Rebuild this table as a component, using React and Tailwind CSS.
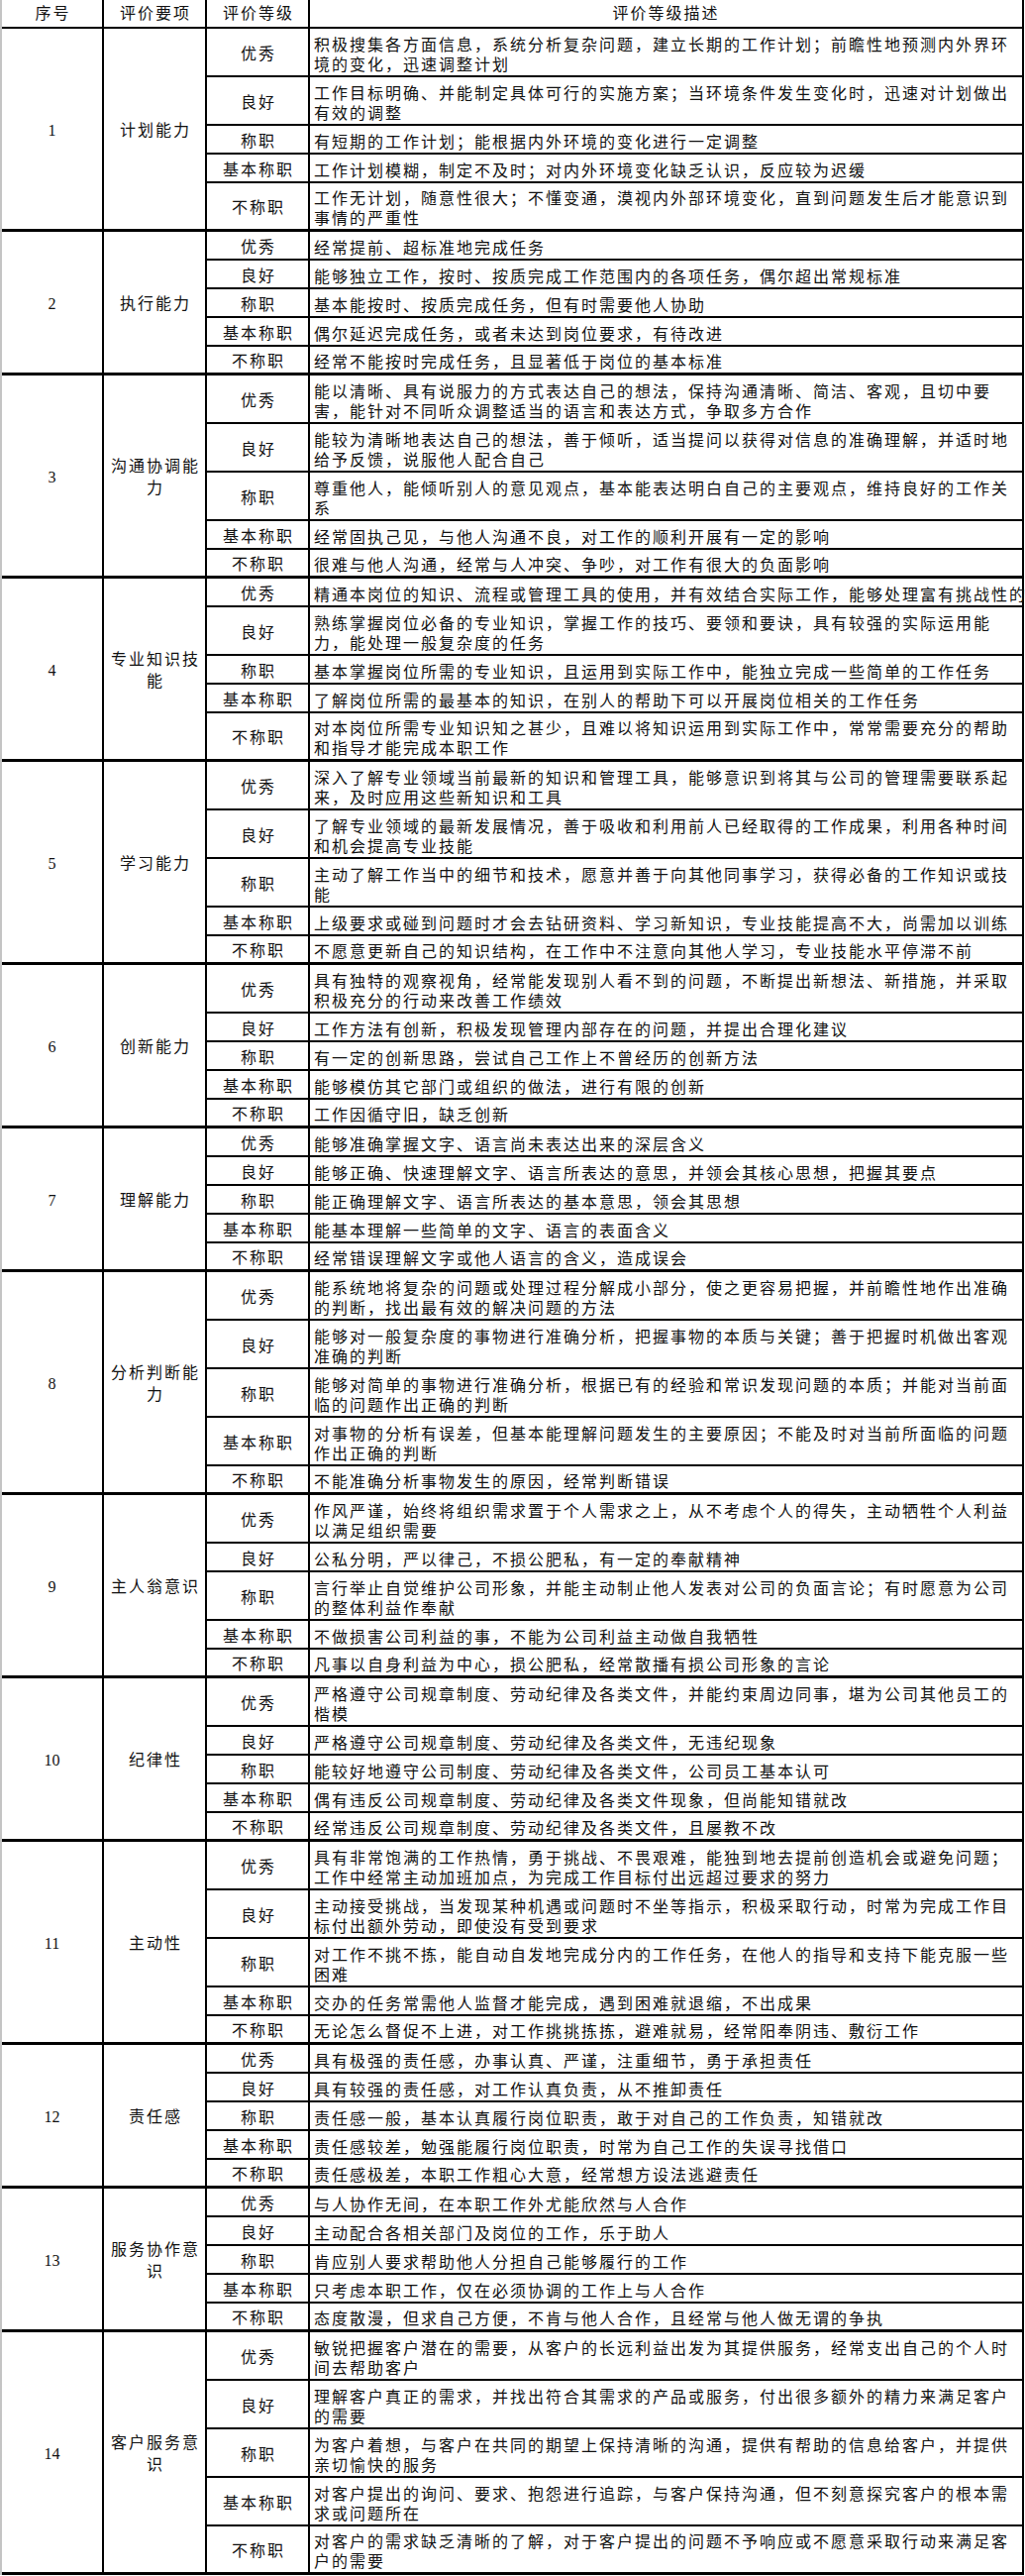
import React from 'react';

const LV = ['优秀', '良好', '称职', '基本称职', '不称职'];

// each group: number, label lines, and the description lines for the five levels
const groups = [
  {
    no: 1,
    item: ['计划能力'],
    rows: [
      ['积极搜集各方面信息，系统分析复杂问题，建立长期的工作计划；前瞻性地预测内外界环', '境的变化，迅速调整计划'],
      ['工作目标明确、并能制定具体可行的实施方案；当环境条件发生变化时，迅速对计划做出', '有效的调整'],
      ['有短期的工作计划；能根据内外环境的变化进行一定调整'],
      ['工作计划模糊，制定不及时；对内外环境变化缺乏认识，反应较为迟缓'],
      ['工作无计划，随意性很大；不懂变通，漠视内外部环境变化，直到问题发生后才能意识到', '事情的严重性'],
    ],
  },
  {
    no: 2,
    item: ['执行能力'],
    rows: [
      ['经常提前、超标准地完成任务'],
      ['能够独立工作，按时、按质完成工作范围内的各项任务，偶尔超出常规标准'],
      ['基本能按时、按质完成任务，但有时需要他人协助'],
      ['偶尔延迟完成任务，或者未达到岗位要求，有待改进'],
      ['经常不能按时完成任务，且显著低于岗位的基本标准'],
    ],
  },
  {
    no: 3,
    item: ['沟通协调能', '力'],
    rows: [
      ['能以清晰、具有说服力的方式表达自己的想法，保持沟通清晰、简洁、客观，且切中要', '害，能针对不同听众调整适当的语言和表达方式，争取多方合作'],
      ['能较为清晰地表达自己的想法，善于倾听，适当提问以获得对信息的准确理解，并适时地', '给予反馈，说服他人配合自己'],
      ['尊重他人，能倾听别人的意见观点，基本能表达明白自己的主要观点，维持良好的工作关', '系'],
      ['经常固执己见，与他人沟通不良，对工作的顺利开展有一定的影响'],
      ['很难与他人沟通，经常与人冲突、争吵，对工作有很大的负面影响'],
    ],
  },
  {
    no: 4,
    item: ['专业知识技', '能'],
    rows: [
      ['精通本岗位的知识、流程或管理工具的使用，并有效结合实际工作，能够处理富有挑战性的工作'],
      ['熟练掌握岗位必备的专业知识，掌握工作的技巧、要领和要诀，具有较强的实际运用能', '力，能处理一般复杂度的任务'],
      ['基本掌握岗位所需的专业知识，且运用到实际工作中，能独立完成一些简单的工作任务'],
      ['了解岗位所需的最基本的知识，在别人的帮助下可以开展岗位相关的工作任务'],
      ['对本岗位所需专业知识知之甚少，且难以将知识运用到实际工作中，常常需要充分的帮助', '和指导才能完成本职工作'],
    ],
  },
  {
    no: 5,
    item: ['学习能力'],
    rows: [
      ['深入了解专业领域当前最新的知识和管理工具，能够意识到将其与公司的管理需要联系起', '来，及时应用这些新知识和工具'],
      ['了解专业领域的最新发展情况，善于吸收和利用前人已经取得的工作成果，利用各种时间', '和机会提高专业技能'],
      ['主动了解工作当中的细节和技术，愿意并善于向其他同事学习，获得必备的工作知识或技', '能'],
      ['上级要求或碰到问题时才会去钻研资料、学习新知识，专业技能提高不大，尚需加以训练'],
      ['不愿意更新自己的知识结构，在工作中不注意向其他人学习，专业技能水平停滞不前'],
    ],
  },
  {
    no: 6,
    item: ['创新能力'],
    rows: [
      ['具有独特的观察视角，经常能发现别人看不到的问题，不断提出新想法、新措施，并采取', '积极充分的行动来改善工作绩效'],
      ['工作方法有创新，积极发现管理内部存在的问题，并提出合理化建议'],
      ['有一定的创新思路，尝试自己工作上不曾经历的创新方法'],
      ['能够模仿其它部门或组织的做法，进行有限的创新'],
      ['工作因循守旧，缺乏创新'],
    ],
  },
  {
    no: 7,
    item: ['理解能力'],
    rows: [
      ['能够准确掌握文字、语言尚未表达出来的深层含义'],
      ['能够正确、快速理解文字、语言所表达的意思，并领会其核心思想，把握其要点'],
      ['能正确理解文字、语言所表达的基本意思，领会其思想'],
      ['能基本理解一些简单的文字、语言的表面含义'],
      ['经常错误理解文字或他人语言的含义，造成误会'],
    ],
  },
  {
    no: 8,
    item: ['分析判断能', '力'],
    rows: [
      ['能系统地将复杂的问题或处理过程分解成小部分，使之更容易把握，并前瞻性地作出准确', '的判断，找出最有效的解决问题的方法'],
      ['能够对一般复杂度的事物进行准确分析，把握事物的本质与关键；善于把握时机做出客观', '准确的判断'],
      ['能够对简单的事物进行准确分析，根据已有的经验和常识发现问题的本质；并能对当前面', '临的问题作出正确的判断'],
      ['对事物的分析有误差，但基本能理解问题发生的主要原因；不能及时对当前所面临的问题', '作出正确的判断'],
      ['不能准确分析事物发生的原因，经常判断错误'],
    ],
  },
  {
    no: 9,
    item: ['主人翁意识'],
    rows: [
      ['作风严谨，始终将组织需求置于个人需求之上，从不考虑个人的得失，主动牺牲个人利益', '以满足组织需要'],
      ['公私分明，严以律己，不损公肥私，有一定的奉献精神'],
      ['言行举止自觉维护公司形象，并能主动制止他人发表对公司的负面言论；有时愿意为公司', '的整体利益作奉献'],
      ['不做损害公司利益的事，不能为公司利益主动做自我牺牲'],
      ['凡事以自身利益为中心，损公肥私，经常散播有损公司形象的言论'],
    ],
  },
  {
    no: 10,
    item: ['纪律性'],
    rows: [
      ['严格遵守公司规章制度、劳动纪律及各类文件，并能约束周边同事，堪为公司其他员工的', '楷模'],
      ['严格遵守公司规章制度、劳动纪律及各类文件，无违纪现象'],
      ['能较好地遵守公司制度、劳动纪律及各类文件，公司员工基本认可'],
      ['偶有违反公司规章制度、劳动纪律及各类文件现象，但尚能知错就改'],
      ['经常违反公司规章制度、劳动纪律及各类文件，且屡教不改'],
    ],
  },
  {
    no: 11,
    item: ['主动性'],
    rows: [
      ['具有非常饱满的工作热情，勇于挑战、不畏艰难，能独到地去提前创造机会或避免问题；', '工作中经常主动加班加点，为完成工作目标付出远超过要求的努力'],
      ['主动接受挑战，当发现某种机遇或问题时不坐等指示，积极采取行动，时常为完成工作目', '标付出额外劳动，即使没有受到要求'],
      ['对工作不挑不拣，能自动自发地完成分内的工作任务，在他人的指导和支持下能克服一些', '困难'],
      ['交办的任务常需他人监督才能完成，遇到困难就退缩，不出成果'],
      ['无论怎么督促不上进，对工作挑挑拣拣，避难就易，经常阳奉阴违、敷衍工作'],
    ],
  },
  {
    no: 12,
    item: ['责任感'],
    rows: [
      ['具有极强的责任感，办事认真、严谨，注重细节，勇于承担责任'],
      ['具有较强的责任感，对工作认真负责，从不推卸责任'],
      ['责任感一般，基本认真履行岗位职责，敢于对自己的工作负责，知错就改'],
      ['责任感较差，勉强能履行岗位职责，时常为自己工作的失误寻找借口'],
      ['责任感极差，本职工作粗心大意，经常想方设法逃避责任'],
    ],
  },
  {
    no: 13,
    item: ['服务协作意', '识'],
    rows: [
      ['与人协作无间，在本职工作外尤能欣然与人合作'],
      ['主动配合各相关部门及岗位的工作，乐于助人'],
      ['肯应别人要求帮助他人分担自己能够履行的工作'],
      ['只考虑本职工作，仅在必须协调的工作上与人合作'],
      ['态度散漫，但求自己方便，不肯与他人合作，且经常与他人做无谓的争执'],
    ],
  },
  {
    no: 14,
    item: ['客户服务意', '识'],
    rows: [
      ['敏锐把握客户潜在的需要，从客户的长远利益出发为其提供服务，经常支出自己的个人时', '间去帮助客户'],
      ['理解客户真正的需求，并找出符合其需求的产品或服务，付出很多额外的精力来满足客户', '的需要'],
      ['为客户着想，与客户在共同的期望上保持清晰的沟通，提供有帮助的信息给客户，并提供', '亲切愉快的服务'],
      ['对客户提出的询问、要求、抱怨进行追踪，与客户保持沟通，但不刻意探究客户的根本需', '求或问题所在'],
      ['对客户的需求缺乏清晰的了解，对于客户提出的问题不予响应或不愿意采取行动来满足客', '户的需要'],
    ],
  },
];

const font = "font-['Liberation_Serif','Noto_Sans_CJK_SC',serif]";

function Group({ g }) {
  return (
    <div className="flex">
      <div className="w-[103px] shrink-0 border-r-2 border-b-[3px] border-black flex items-center justify-center text-[16px] font-['Liberation_Serif',serif] pt-1">
        {g.no}
      </div>
      <div className="w-[104px] shrink-0 border-r-2 border-b-[3px] border-black flex flex-col items-center justify-center leading-[22px] tracking-[2px] pl-[2px] pt-1">
        {g.item.map((t) => (
          <div key={t}>{t}</div>
        ))}
      </div>
      <div className="flex-1 flex flex-col min-w-0">
        {g.rows.map((lines, i) => {
          const last = i === g.rows.length - 1;
          const tall = lines.length > 1;
          return (
            <div
              key={i}
              className={`flex border-black ${last ? 'border-b-[3px]' : 'border-b-2'} ${tall ? 'h-[49px]' : 'h-[29px]'}`}
            >
              <div className="w-[104px] shrink-0 border-r-2 border-black flex items-center justify-center tracking-[2px] pl-[2px] pt-1">
                {LV[i]}
              </div>
              <div className="flex-1 min-w-0 flex flex-col justify-end pl-1 leading-[20px] tracking-[2px]">
                {lines.map((l, j) => (
                  <div key={j} className="whitespace-nowrap">
                    {l}
                  </div>
                ))}
              </div>
            </div>
          );
        })}
      </div>
    </div>
  );
}

export default function App() {
  return (
    <div className={`w-[1035px] overflow-hidden bg-white text-[#111] text-[16px] ${font}`}>
      <div className="w-[1034px] border-l-2 border-l-[#c4c4c4] border-r-2 border-r-black">
        <div className="flex h-[29px] border-b-2 border-black">
          <div className="w-[103px] shrink-0 border-r-2 border-black flex items-center justify-center tracking-[2px] pl-[2px]">序号</div>
          <div className="w-[104px] shrink-0 border-r-2 border-black flex items-center justify-center tracking-[2px] pl-[2px]">评价要项</div>
          <div className="w-[104px] shrink-0 border-r-2 border-black flex items-center justify-center tracking-[2px] pl-[2px]">评价等级</div>
          <div className="flex-1 flex items-center justify-center tracking-[2px]">评价等级描述</div>
        </div>
        {groups.map((g) => (
          <Group key={g.no} g={g} />
        ))}
      </div>
    </div>
  );
}
